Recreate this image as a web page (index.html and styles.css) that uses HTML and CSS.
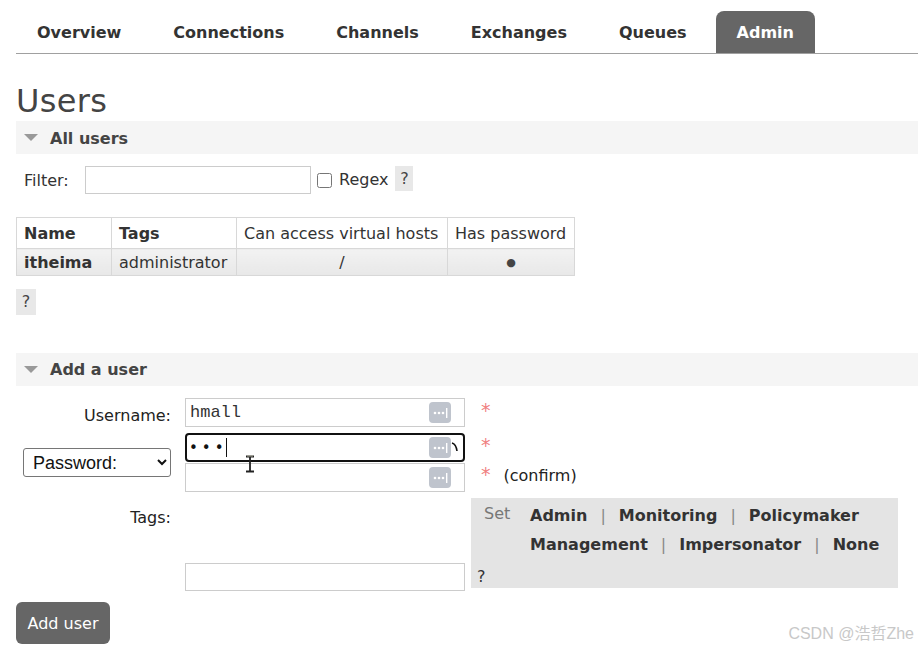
FILE: index.html
```html
<!DOCTYPE html>
<html>
<head>
<meta charset="utf-8">
<link rel="stylesheet" href="styles.css">
</head>
<body>
<div class="page">
  <ul class="nav">
    <li class="tab">Overview</li>
    <li class="tab">Connections</li>
    <li class="tab">Channels</li>
    <li class="tab">Exchanges</li>
    <li class="tab">Queues</li>
    <li class="tab active">Admin</li>
  </ul>

  <h1 class="title">Users</h1>

  <div class="band"><span class="tri"></span><span class="band-text">All users</span></div>

  <div class="filter-row">
    <label class="filter-label">Filter:</label>
    <input class="filter-input" type="text">
    <input class="chk" type="checkbox">
    <span class="regex">Regex</span>
    <span class="help">?</span>
  </div>

  <table class="users">
    <thead>
      <tr>
        <th class="c-name b">Name</th>
        <th class="c-tags b">Tags</th>
        <th class="c-vh">Can access virtual hosts</th>
        <th class="c-pw">Has password</th>
      </tr>
    </thead>
    <tbody>
      <tr>
        <td class="b">itheima</td>
        <td>administrator</td>
        <td class="center">/</td>
        <td class="center dot">●</td>
      </tr>
    </tbody>
  </table>

  <div class="help help-block">?</div>

  <div class="band band-add"><span class="tri"></span><span class="band-text">Add a user</span></div>

  <div class="form">
    <div class="lbl lbl-user">Username:</div>
    <div class="field">
      <span class="val mono">hmall</span>
      <span class="pm"><svg width="22" height="21" viewBox="0 0 22 21"><circle cx="6" cy="11" r="1.3" fill="#fff"/><circle cx="10" cy="11" r="1.3" fill="#fff"/><circle cx="14" cy="11" r="1.3" fill="#fff"/><rect x="17" y="6" width="1.4" height="10" fill="#fff"/></svg></span>
    </div>
    <div class="req"><span class="star">*</span></div>

    <div class="lbl lbl-select">
      <select class="sel"><option>Password:</option></select>
    </div>
    <div class="pw-stack">
      <div class="field focused">
        <span class="val dots">•••</span><span class="caret"></span>
        <span class="pm"><svg width="22" height="21" viewBox="0 0 22 21"><circle cx="6" cy="11" r="1.3" fill="#fff"/><circle cx="10" cy="11" r="1.3" fill="#fff"/><circle cx="14" cy="11" r="1.3" fill="#fff"/><rect x="17" y="6" width="1.4" height="10" fill="#fff"/></svg></span>
        <svg class="arc" width="8" height="12" viewBox="0 0 8 12"><path d="M1 2 Q5 3 6 10" stroke="#111" stroke-width="1.6" fill="none"/></svg>
        <svg class="ibeam" width="12" height="18" viewBox="0 0 12 18"><path d="M2 1.5 H10 M6 1.5 V16.5 M2 16.5 H10" stroke="#222" stroke-width="1.8" fill="none"/><path d="M3 1 H9" stroke="#aa9" stroke-width="1"/></svg>
      </div>
      <div class="field">
        <span class="pm"><svg width="22" height="21" viewBox="0 0 22 21"><circle cx="6" cy="11" r="1.3" fill="#fff"/><circle cx="10" cy="11" r="1.3" fill="#fff"/><circle cx="14" cy="11" r="1.3" fill="#fff"/><rect x="17" y="6" width="1.4" height="10" fill="#fff"/></svg></span>
      </div>
    </div>
    <div class="req-stack">
      <div class="req-line"><span class="star">*</span></div>
      <div class="req-line"><span class="star">*</span><span class="confirm">(confirm)</span></div>
    </div>

    <div class="lbl lbl-tags">Tags:</div>
    <div class="tags-col">
      <div class="field tags-field"></div>
    </div>
    <div class="tagbox">
      <div class="tagbox-top">
        <span class="set">Set</span>
        <div class="tag-links">
          <div class="tag-line"><b>Admin</b><span class="sep">|</span><b>Monitoring</b><span class="sep">|</span><b>Policymaker</b></div>
          <div class="tag-line"><b>Management</b><span class="sep">|</span><b>Impersonator</b><span class="sep">|</span><b>None</b></div>
        </div>
      </div>
      <div class="tag-help">?</div>
    </div>
  </div>

  <button class="add-btn">Add user</button>

  <div class="watermark">CSDN @浩哲Zhe</div>
</div>
</body>
</html>
```

FILE: styles.css
```css
html, body {
  margin: 0;
  padding: 0;
  background: #fff;
}
body {
  font-family: "DejaVu Sans", Verdana, sans-serif;
  font-size: 16px;
  color: #444;
}
.page {
  position: relative;
  width: 902px;
  height: 650px;
  padding-left: 16px;
  overflow: hidden;
}
.nav {
  list-style: none;
  margin: 11px 0 0;
  padding: 0;
  display: flex;
  height: 42px;
  border-bottom: 1px solid #a0a0a0;
}
.tab {
  padding: 1px 21px 0;
  margin-right: 10px;
  font-weight: bold;
  color: #333;
  line-height: 41px;
}
.tab.active {
  background: #666;
  color: #fff;
  border-radius: 8px 8px 0 0;
  margin-left: -2px;
}
.title {
  margin: 28px 0 0;
  font-size: 32px;
  font-weight: normal;
  line-height: 39px;
  height: 39px;
  color: #444;
  letter-spacing: 0.3px;
}
.band {
  height: 33px;
  background: #f5f5f5;
  display: flex;
  align-items: center;
}
.tri {
  width: 0;
  height: 0;
  border-left: 7px solid transparent;
  border-right: 7px solid transparent;
  border-top: 7px solid #999;
  margin-left: 8px;
  margin-right: 12px;
}
.band-text {
  font-weight: bold;
  color: #444;
  font-size: 16px;
  padding-top: 2px;
}
.filter-row {
  margin-top: 12px;
  height: 28px;
  display: flex;
  align-items: center;
}
.filter-label {
  margin-left: 8px;
  width: 61px;
  color: #333;
}
.filter-input {
  box-sizing: border-box;
  width: 226px;
  height: 28px;
  border: 1px solid #ccc;
  margin: 0;
  padding: 0;
}
.chk {
  width: 15px;
  height: 15px;
  margin: 0 7px 0 6px;
}
.regex {
  color: #333;
  margin-top: -2px;
}
.help {
  display: inline-block;
  background: #e8e8e8;
  color: #444;
  text-align: center;
  font-size: 16px;
}
.filter-row .help {
  margin-left: 7px;
  width: 18px;
  height: 25px;
  line-height: 25px;
  margin-top: -3px;
}
.users {
  margin-top: 23px;
  border-collapse: collapse;
  border: 1px solid #d8d8d8;
  color: #333;
}
.users th, .users td {
  border: 1px solid #d8d8d8;
  padding: 0 7px;
  text-align: left;
  white-space: nowrap;
  font-weight: normal;
}
.users th {
  height: 30px;
  background: #fff;
}
.users td {
  height: 26px;
  background: linear-gradient(#f2f2f2, #e8e8e8);
}
.users .b {
  font-weight: bold;
}
.c-name { width: 80px; }
.c-tags { width: 110px; }
.c-vh { width: 196px; }
.c-pw { width: 112px; }
.users td.center {
  text-align: center;
}
.dot {
  font-size: 11px;
  color: #444;
}
.help-block {
  display: block;
  width: 20px;
  height: 26px;
  line-height: 26px;
  margin-top: 13px;
}
.band-add {
  margin-top: 38px;
}
.band-add .band-text {
  padding-top: 0;
}
.form {
  margin-top: 12px;
  display: grid;
  grid-template-columns: 169px 286px 427px;
  row-gap: 6px;
}
.lbl {
  width: 155px;
  box-sizing: border-box;
  text-align: right;
  color: #222;
  align-self: center;
}
.lbl-user {
  padding-top: 5px;
}
.field {
  position: relative;
  box-sizing: border-box;
  width: 280px;
  height: 29px;
  border: 1px solid #ccc;
  background: #fff;
  display: flex;
  align-items: center;
}
.pw-stack .field + .field {
  height: 29px;
  margin-top: 1px;
}
.val {
  padding-left: 4px;
  color: #333;
}
.mono {
  font-family: "Liberation Mono", "Courier New", monospace;
  font-size: 17px;
}
.dots {
  font-size: 15px;
  letter-spacing: 4px;
  color: #111;
  padding-left: 2px;
}
.caret {
  width: 1.5px;
  height: 19px;
  background: #111;
  margin-left: -2px;
}
.focused {
  border: 2px solid #111;
  border-radius: 4px;
  z-index: 2;
}
.pm {
  position: absolute;
  right: 13px;
  top: 3px;
  width: 22px;
  height: 21px;
  background: #bfc4cd;
  border-radius: 4px;
  display: block;
}
.pm svg {
  display: block;
}
.focused .pm {
  right: 12px;
  top: 2px;
}
.arc {
  position: absolute;
  right: 4px;
  top: 6px;
}
.ibeam {
  position: absolute;
  left: 57px;
  top: 20px;
  z-index: 3;
}
.req {
  padding-left: 10px;
  align-self: start;
}
.star {
  color: #f08080;
  font-size: 19px;
  line-height: 24px;
}
.lbl-select {
  text-align: left;
  padding-left: 7px;
  display: flex;
  align-items: center;
}
.sel {
  width: 148px;
  height: 29px;
  font-family: "Liberation Sans", Arial, sans-serif;
  font-size: 18px;
  color: #111;
  border: 1px solid #767676;
  border-radius: 3px;
  background: #fff;
  padding-left: 5px;
}
.req-stack {
  padding-left: 10px;
}
.req-line {
  height: 29px;
}
.req-line + .req-line {
  display: flex;
  align-items: flex-start;
}
.confirm {
  margin-left: 13px;
  color: #222;
  line-height: 24px;
  margin-top: 2px;
}
.lbl-tags {
  align-self: start;
  padding-top: 10px;
  line-height: 20px;
}
.tags-col {
  display: flex;
  flex-direction: column;
  justify-content: flex-end;
  height: 93px;
}
.tags-field {
  height: 28px;
}
.tagbox {
  width: 427px;
  height: 90px;
  box-sizing: border-box;
  background: #e4e4e4;
  padding: 3px 6px 1px 6px;
  display: flex;
  flex-direction: column;
  justify-content: space-between;
}
.tagbox-top {
  display: flex;
}
.set {
  width: 46px;
  margin-left: 7px;
  color: #777;
  line-height: 26px;
}
.tag-line {
  line-height: 29px;
  color: #333;
}
.tag-line b {
  font-weight: bold;
}
.sep {
  color: #888;
  margin: 0 13px;
  font-weight: normal;
}
.tag-help {
  color: #333;
  line-height: 20px;
}
.add-btn {
  display: block;
  margin-top: 11px;
  width: 94px;
  height: 42px;
  background: #666;
  color: #fff;
  border: none;
  border-radius: 6px;
  font-family: "DejaVu Sans", Verdana, sans-serif;
  font-size: 16px;
  padding: 0;
}
.watermark {
  position: absolute;
  right: 4px;
  bottom: 6px;
  font-family: "Liberation Sans", "Noto Sans CJK SC", sans-serif;
  font-size: 16px;
  color: #c8c8c8;
}
```
